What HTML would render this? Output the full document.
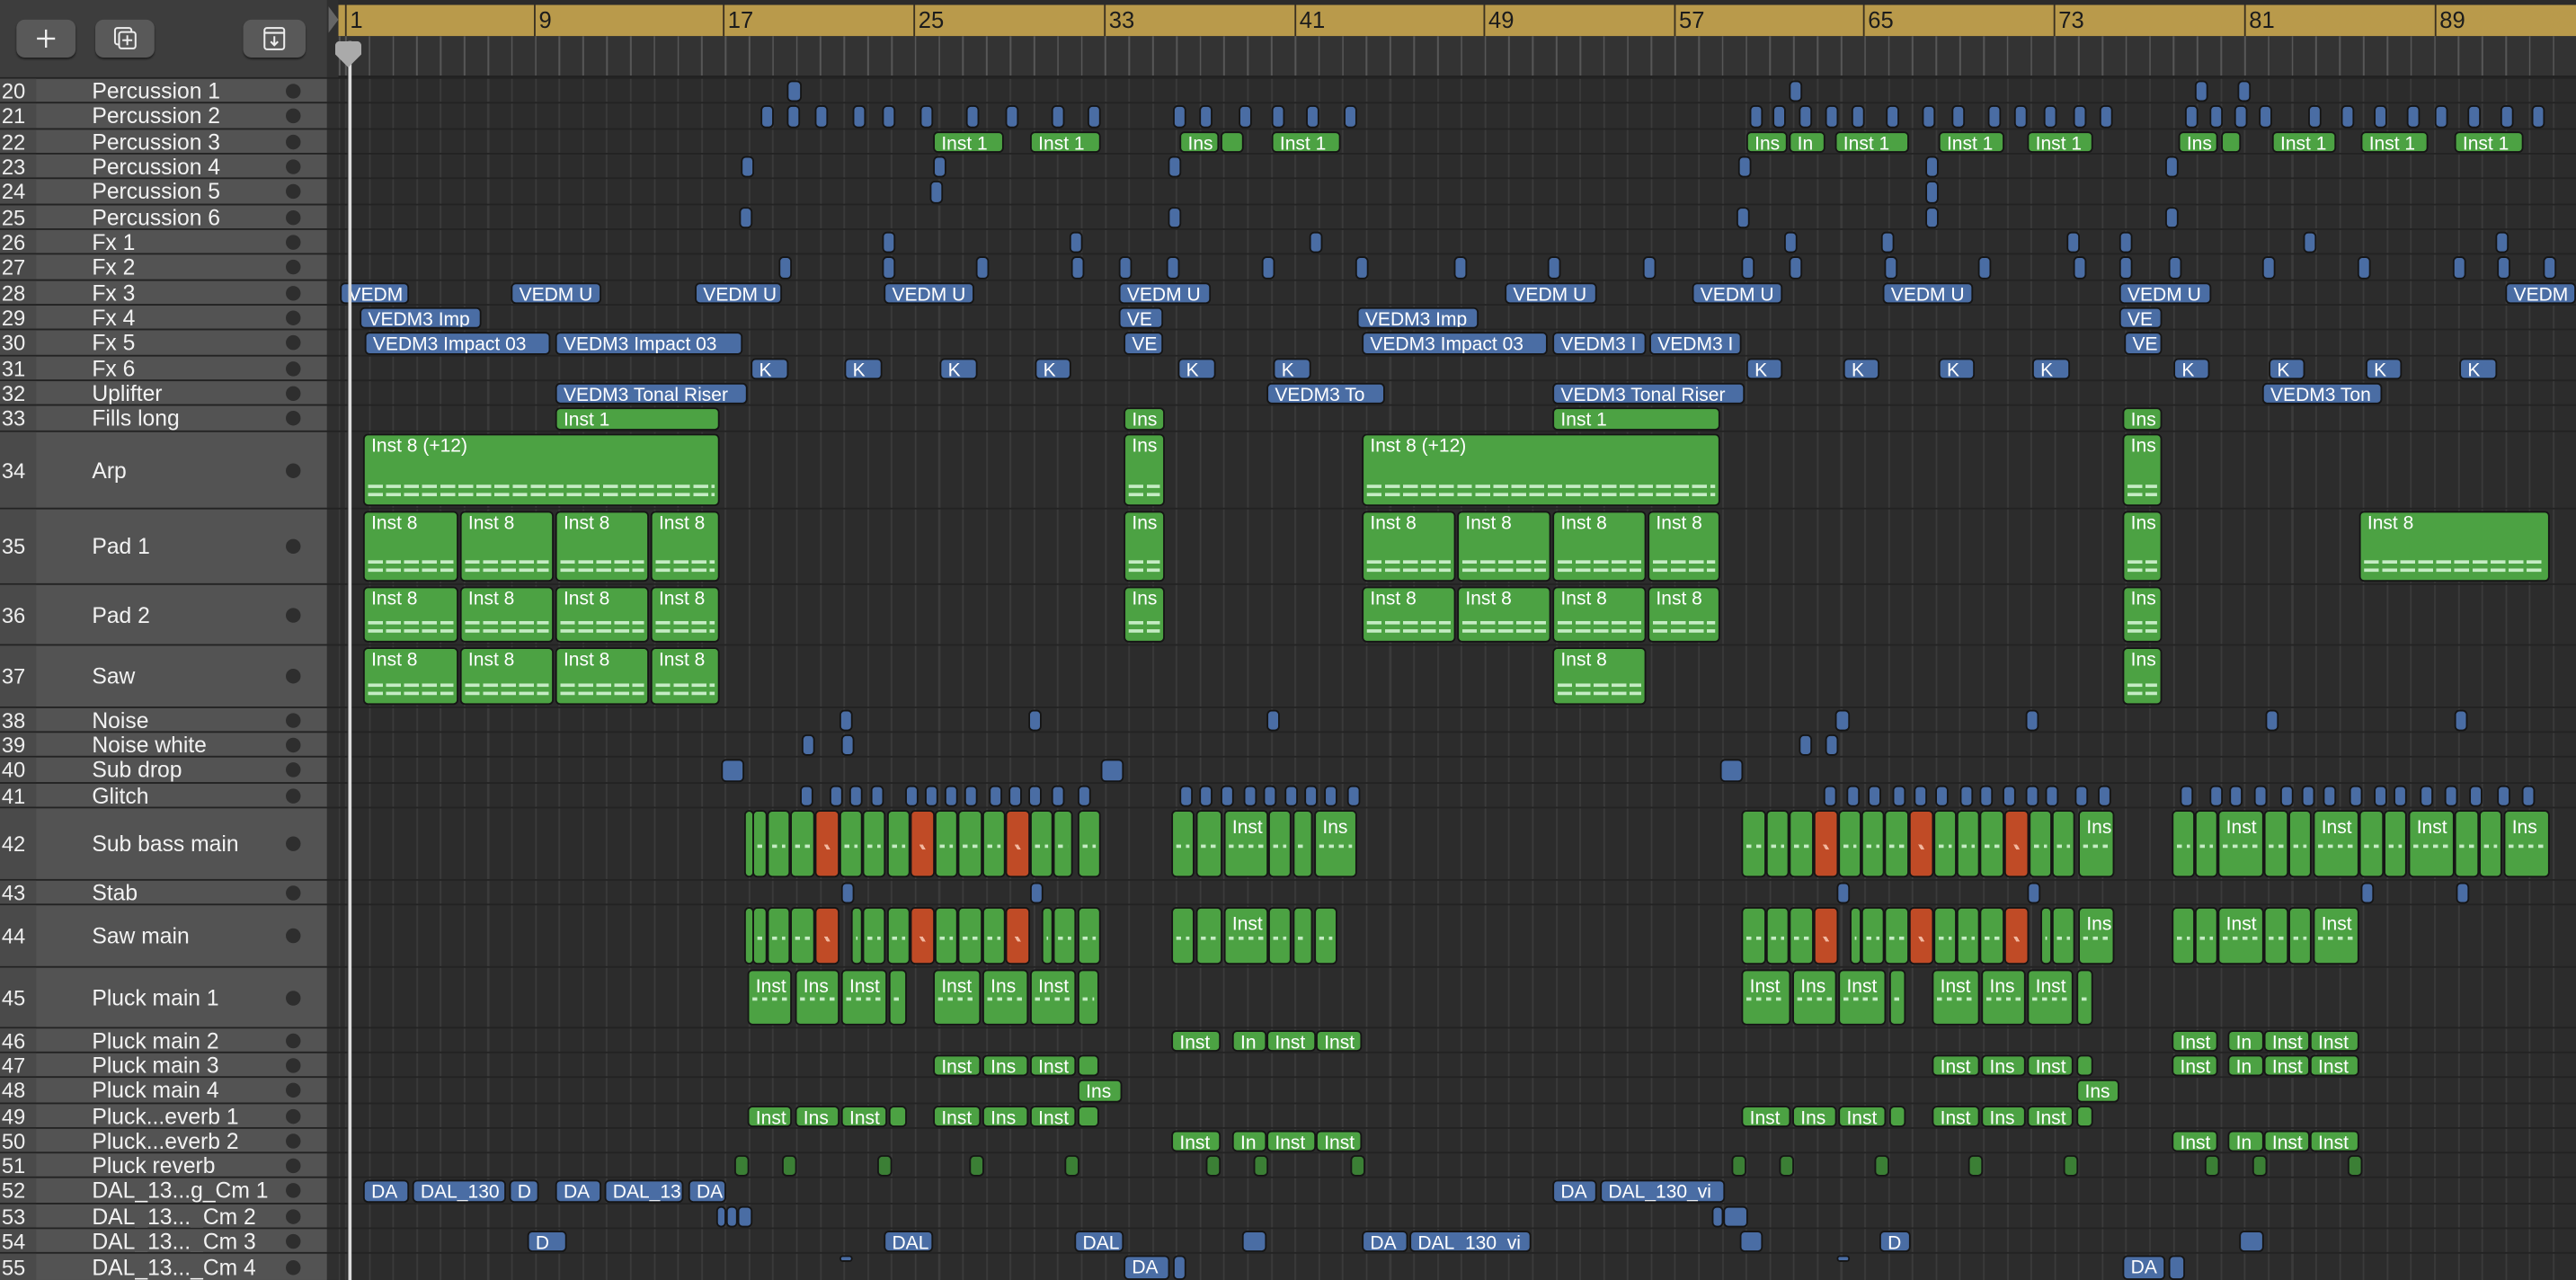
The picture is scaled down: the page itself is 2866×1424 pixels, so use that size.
<!DOCTYPE html>
<html><head><meta charset="utf-8"><style>
*{margin:0;padding:0}
html,body{width:2866px;height:1424px;overflow:hidden;background:#2b2b2b}
#s{position:absolute;left:0;top:0;width:1568px;height:779px;transform:scale(1.82781,1.82798);transform-origin:0 0;font-family:"Liberation Sans",sans-serif;background:#2b2b2b;overflow:hidden}
#tb{position:absolute;left:0;top:0;width:200px;height:47px;background:#3d3d3d;border-bottom:1px solid #2a2a2a}
.btn{position:absolute;top:12px;height:23px;background:#595959;border-radius:5px;box-shadow:0 1px 1px #222}
#arr{position:absolute;left:206px;top:44px;width:1362px;height:735px;background-color:#2c2c2c;background-image:repeating-linear-gradient(90deg,#3b3b3b 0 1px,transparent 1px 14.45px);background-position:4px 0}
#gold{position:absolute;left:206px;top:3px;width:1362px;height:19px;background:#b99a4b}
#lr{position:absolute;left:206px;top:22px;width:1362px;height:24px;background-color:#333;background-image:repeating-linear-gradient(90deg,#575757 0 1px,transparent 1px 14.45px);background-position:4px 0;border-bottom:1px solid #222}
.bn{position:absolute;top:0;height:19px;border-left:1px solid #3a3020;color:#1c1c1c;font-size:14px;line-height:19px;padding-left:2px}
.row{position:absolute;left:0;width:1568px;border-top:1px solid #232323;box-sizing:border-box}
.h{position:absolute;left:0;top:0;bottom:0;width:199px;background:#535353}
.n{position:absolute;left:0;top:0;bottom:0;width:22px;background:#4a4a4a;color:#eee;font-size:13px;display:flex;align-items:center;padding-left:1px;box-sizing:border-box}
.nm{position:absolute;left:56px;top:0;bottom:0;display:flex;align-items:center;color:#f2f2f2;font-size:13.5px;white-space:nowrap}
.d{position:absolute;left:174px;top:50%;margin-top:-4.5px;width:9px;height:9px;border-radius:50%;background:#2e2e2e}
.b{position:absolute;top:1px;bottom:0;box-sizing:border-box;border:1px solid #151515;border-radius:3px;background:#4a6da4;color:#fff;font-size:11.5px;line-height:12px;padding:1px 0 0 4px;overflow:hidden;white-space:nowrap}
.g{background:#4ca243}
.r{background:#c04b26}
.dg{background:#3b7f35}
.t::after{content:"";position:absolute;left:2px;right:2px;bottom:5px;height:7px;background:repeating-linear-gradient(90deg,#c5ecc4 0 9px,transparent 9px 11px) 0 0/100% 2px no-repeat,repeating-linear-gradient(90deg,#c5ecc4 0 9px,transparent 9px 11px) 0 5px/100% 2px no-repeat}
.s::after{content:"";position:absolute;left:2px;right:2px;top:50%;height:3px;background:repeating-linear-gradient(90deg,#c5ecc4 0 3px,transparent 3px 6px) 0 0/100% 2px no-repeat}
.r.s::after{background:linear-gradient(60deg,transparent 40%,#f2b8a0 40% 60%,transparent 60%)}
#ph{position:absolute;left:212px;top:25px;width:1.5px;height:754px;background:#ddd}
#phk{position:absolute;left:204px;top:25px;width:16px;height:16px;background:#aaa;clip-path:polygon(0 0,100% 0,100% 50%,50% 100%,0 50%);border-radius:3px}
</style></head><body><div id="s">
<div id="arr"></div>
<div id="tb">
<div class="btn" style="left:10px;width:36px"><svg width="36" height="23" viewBox="0 0 36 23"><path d="M18 6v11M12.5 11.5h11" stroke="#eee" stroke-width="1.3"/></svg></div>
<div class="btn" style="left:58px;width:36px"><svg width="36" height="23" viewBox="0 0 36 23"><rect x="12" y="5" width="10" height="10" rx="1.5" fill="none" stroke="#eee" stroke-width="1.1"/><rect x="14.5" y="7.5" width="10" height="10" rx="1.5" fill="#595959" stroke="#eee" stroke-width="1.1"/><path d="M19.5 9.5v6M16.5 12.5h6" stroke="#eee" stroke-width="1.1"/></svg></div>
<div class="btn" style="left:148px;width:38px"><svg width="38" height="23" viewBox="0 0 38 23"><rect x="13" y="5" width="12" height="13" rx="1.5" fill="none" stroke="#eee" stroke-width="1.1"/><path d="M13 8h12M19 10v5.5M16.8 13.3l2.2 2.2 2.2-2.2" fill="none" stroke="#eee" stroke-width="1.1"/></svg></div>
</div>
<div style="position:absolute;left:199px;top:0;width:7px;height:779px;background:#2f2f2f"></div>
<div style="position:absolute;left:200px;top:4px;width:0;height:0;border-left:6px solid #666;border-top:8px solid transparent;border-bottom:8px solid transparent"></div>
<div id="gold">
<div class="bn" style="left:4px">1</div><div class="bn" style="left:119px">9</div><div class="bn" style="left:234px">17</div><div class="bn" style="left:350px">25</div><div class="bn" style="left:466px">33</div><div class="bn" style="left:582px">41</div><div class="bn" style="left:697px">49</div><div class="bn" style="left:813px">57</div><div class="bn" style="left:928px">65</div><div class="bn" style="left:1044px">73</div><div class="bn" style="left:1160px">81</div><div class="bn" style="left:1276px">89</div>
</div>
<div id="lr"></div>

<div class="row" style="top:47px;height:15px"><div class="h"><div class="n">20</div><div class="nm">Percussion 1</div><div class="d"></div></div>
<div class="b" style="left:479px;width:9px"></div><div class="b" style="left:1336px;width:8px"></div><div class="b" style="left:1362px;width:8px"></div><div class="b" style="left:1089px;width:8px"></div></div>
<div class="row" style="top:62px;height:16px"><div class="h"><div class="n">21</div><div class="nm">Percussion 2</div><div class="d"></div></div>
<div class="b" style="left:463px;width:8px"></div><div class="b" style="left:479px;width:8px"></div><div class="b" style="left:496px;width:8px"></div><div class="b" style="left:519px;width:8px"></div><div class="b" style="left:537px;width:8px"></div><div class="b" style="left:560px;width:8px"></div><div class="b" style="left:588px;width:8px"></div><div class="b" style="left:612px;width:8px"></div><div class="b" style="left:640px;width:8px"></div><div class="b" style="left:662px;width:8px"></div><div class="b" style="left:714px;width:8px"></div><div class="b" style="left:730px;width:8px"></div><div class="b" style="left:754px;width:8px"></div><div class="b" style="left:774px;width:8px"></div><div class="b" style="left:795px;width:8px"></div><div class="b" style="left:818px;width:8px"></div><div class="b" style="left:1065px;width:8px"></div><div class="b" style="left:1079px;width:8px"></div><div class="b" style="left:1095px;width:8px"></div><div class="b" style="left:1111px;width:8px"></div><div class="b" style="left:1127px;width:8px"></div><div class="b" style="left:1148px;width:8px"></div><div class="b" style="left:1170px;width:8px"></div><div class="b" style="left:1188px;width:8px"></div><div class="b" style="left:1210px;width:8px"></div><div class="b" style="left:1226px;width:8px"></div><div class="b" style="left:1244px;width:8px"></div><div class="b" style="left:1262px;width:8px"></div><div class="b" style="left:1278px;width:8px"></div><div class="b" style="left:1330px;width:8px"></div><div class="b" style="left:1345px;width:8px"></div><div class="b" style="left:1360px;width:8px"></div><div class="b" style="left:1375px;width:8px"></div><div class="b" style="left:1405px;width:8px"></div><div class="b" style="left:1425px;width:8px"></div><div class="b" style="left:1445px;width:8px"></div><div class="b" style="left:1465px;width:8px"></div><div class="b" style="left:1482px;width:8px"></div><div class="b" style="left:1502px;width:8px"></div><div class="b" style="left:1522px;width:8px"></div><div class="b" style="left:1541px;width:8px"></div></div>
<div class="row" style="top:78px;height:15px"><div class="h"><div class="n">22</div><div class="nm">Percussion 3</div><div class="d"></div></div>
<div class="b g" style="left:568px;width:43px">Inst 1</div><div class="b g" style="left:627px;width:43px">Inst 1</div><div class="b g" style="left:718px;width:24px">Ins</div><div class="b g" style="left:743px;width:14px"></div><div class="b g" style="left:774px;width:42px">Inst 1</div><div class="b g" style="left:1063px;width:25px">Ins</div><div class="b g" style="left:1089px;width:22px">In</div><div class="b g" style="left:1117px;width:45px">Inst 1</div><div class="b g" style="left:1180px;width:40px">Inst 1</div><div class="b g" style="left:1234px;width:40px">Inst 1</div><div class="b g" style="left:1326px;width:24px">Ins</div><div class="b g" style="left:1352px;width:12px"></div><div class="b g" style="left:1383px;width:39px">Inst 1</div><div class="b g" style="left:1437px;width:41px">Inst 1</div><div class="b g" style="left:1494px;width:42px">Inst 1</div></div>
<div class="row" style="top:93px;height:15px"><div class="h"><div class="n">23</div><div class="nm">Percussion 4</div><div class="d"></div></div>
<div class="b" style="left:451px;width:8px"></div><div class="b" style="left:568px;width:8px"></div><div class="b" style="left:711px;width:8px"></div><div class="b" style="left:1058px;width:8px"></div><div class="b" style="left:1172px;width:8px"></div><div class="b" style="left:1318px;width:8px"></div></div>
<div class="row" style="top:108px;height:16px"><div class="h"><div class="n">24</div><div class="nm">Percussion 5</div><div class="d"></div></div>
<div class="b" style="left:566px;width:8px"></div><div class="b" style="left:1172px;width:8px"></div></div>
<div class="row" style="top:124px;height:15px"><div class="h"><div class="n">25</div><div class="nm">Percussion 6</div><div class="d"></div></div>
<div class="b" style="left:450px;width:8px"></div><div class="b" style="left:711px;width:8px"></div><div class="b" style="left:1057px;width:8px"></div><div class="b" style="left:1172px;width:8px"></div><div class="b" style="left:1318px;width:8px"></div></div>
<div class="row" style="top:139px;height:15px"><div class="h"><div class="n">26</div><div class="nm">Fx 1</div><div class="d"></div></div>
<div class="b" style="left:537px;width:8px"></div><div class="b" style="left:651px;width:8px"></div><div class="b" style="left:797px;width:8px"></div><div class="b" style="left:1086px;width:8px"></div><div class="b" style="left:1145px;width:8px"></div><div class="b" style="left:1258px;width:8px"></div><div class="b" style="left:1290px;width:8px"></div><div class="b" style="left:1402px;width:8px"></div><div class="b" style="left:1519px;width:8px"></div></div>
<div class="row" style="top:154px;height:16px"><div class="h"><div class="n">27</div><div class="nm">Fx 2</div><div class="d"></div></div>
<div class="b" style="left:474px;width:8px"></div><div class="b" style="left:537px;width:8px"></div><div class="b" style="left:594px;width:8px"></div><div class="b" style="left:652px;width:8px"></div><div class="b" style="left:681px;width:8px"></div><div class="b" style="left:710px;width:8px"></div><div class="b" style="left:768px;width:8px"></div><div class="b" style="left:825px;width:8px"></div><div class="b" style="left:885px;width:8px"></div><div class="b" style="left:942px;width:8px"></div><div class="b" style="left:1000px;width:8px"></div><div class="b" style="left:1060px;width:8px"></div><div class="b" style="left:1089px;width:8px"></div><div class="b" style="left:1147px;width:8px"></div><div class="b" style="left:1204px;width:8px"></div><div class="b" style="left:1262px;width:8px"></div><div class="b" style="left:1290px;width:8px"></div><div class="b" style="left:1320px;width:8px"></div><div class="b" style="left:1377px;width:8px"></div><div class="b" style="left:1435px;width:8px"></div><div class="b" style="left:1493px;width:8px"></div><div class="b" style="left:1520px;width:8px"></div><div class="b" style="left:1548px;width:8px"></div></div>
<div class="row" style="top:170px;height:15px"><div class="h"><div class="n">28</div><div class="nm">Fx 3</div><div class="d"></div></div>
<div class="b" style="left:207px;width:42px">VEDM</div><div class="b" style="left:311px;width:55px">VEDM U</div><div class="b" style="left:423px;width:53px">VEDM U</div><div class="b" style="left:538px;width:55px">VEDM U</div><div class="b" style="left:681px;width:56px">VEDM U</div><div class="b" style="left:916px;width:56px">VEDM U</div><div class="b" style="left:1030px;width:55px">VEDM U</div><div class="b" style="left:1146px;width:55px">VEDM U</div><div class="b" style="left:1290px;width:56px">VEDM U</div><div class="b" style="left:1525px;width:43px">VEDM</div></div>
<div class="row" style="top:185px;height:15px"><div class="h"><div class="n">29</div><div class="nm">Fx 4</div><div class="d"></div></div>
<div class="b" style="left:219px;width:74px">VEDM3 Imp</div><div class="b" style="left:681px;width:27px">VE</div><div class="b" style="left:826px;width:74px">VEDM3 Imp</div><div class="b" style="left:1290px;width:26px">VE</div></div>
<div class="row" style="top:200px;height:16px"><div class="h"><div class="n">30</div><div class="nm">Fx 5</div><div class="d"></div></div>
<div class="b" style="left:222px;width:113px">VEDM3 Impact 03</div><div class="b" style="left:338px;width:114px">VEDM3 Impact 03</div><div class="b" style="left:684px;width:24px">VE</div><div class="b" style="left:829px;width:113px">VEDM3 Impact 03</div><div class="b" style="left:945px;width:57px">VEDM3 I</div><div class="b" style="left:1004px;width:56px">VEDM3 I</div><div class="b" style="left:1293px;width:23px">VE</div></div>
<div class="row" style="top:216px;height:15px"><div class="h"><div class="n">31</div><div class="nm">Fx 6</div><div class="d"></div></div>
<div class="b" style="left:457px;width:23px">K</div><div class="b" style="left:514px;width:23px">K</div><div class="b" style="left:572px;width:23px">K</div><div class="b" style="left:630px;width:22px">K</div><div class="b" style="left:717px;width:23px">K</div><div class="b" style="left:775px;width:23px">K</div><div class="b" style="left:1063px;width:22px">K</div><div class="b" style="left:1122px;width:22px">K</div><div class="b" style="left:1180px;width:22px">K</div><div class="b" style="left:1237px;width:23px">K</div><div class="b" style="left:1323px;width:22px">K</div><div class="b" style="left:1381px;width:22px">K</div><div class="b" style="left:1440px;width:22px">K</div><div class="b" style="left:1497px;width:23px">K</div></div>
<div class="row" style="top:231px;height:15px"><div class="h"><div class="n">32</div><div class="nm">Uplifter</div><div class="d"></div></div>
<div class="b" style="left:338px;width:117px">VEDM3 Tonal Riser</div><div class="b" style="left:771px;width:72px">VEDM3 To</div><div class="b" style="left:945px;width:117px">VEDM3 Tonal Riser</div><div class="b" style="left:1377px;width:73px">VEDM3 Ton</div></div>
<div class="row" style="top:246px;height:16px"><div class="h"><div class="n">33</div><div class="nm">Fills long</div><div class="d"></div></div>
<div class="b g" style="left:338px;width:100px">Inst 1</div><div class="b g" style="left:684px;width:25px">Ins</div><div class="b g" style="left:945px;width:102px">Inst 1</div><div class="b g" style="left:1292px;width:24px">Ins</div></div>
<div class="row" style="top:262px;height:47px"><div class="h"><div class="n">34</div><div class="nm">Arp</div><div class="d"></div></div>
<div class="b g t" style="left:221px;width:217px;top:1px;bottom:1px">Inst 8 (+12)</div><div class="b g t" style="left:684px;width:25px;top:1px;bottom:1px">Ins</div><div class="b g t" style="left:829px;width:218px;top:1px;bottom:1px">Inst 8 (+12)</div><div class="b g t" style="left:1292px;width:24px;top:1px;bottom:1px">Ins</div></div>
<div class="row" style="top:309px;height:46px"><div class="h"><div class="n">35</div><div class="nm">Pad 1</div><div class="d"></div></div>
<div class="b g t" style="left:221px;width:58px;bottom:1px">Inst 8</div><div class="b g t" style="left:280px;width:57px;bottom:1px">Inst 8</div><div class="b g t" style="left:338px;width:57px;bottom:1px">Inst 8</div><div class="b g t" style="left:396px;width:42px;bottom:1px">Inst 8</div><div class="b g t" style="left:684px;width:25px;bottom:1px">Ins</div><div class="b g t" style="left:829px;width:57px;bottom:1px">Inst 8</div><div class="b g t" style="left:887px;width:57px;bottom:1px">Inst 8</div><div class="b g t" style="left:945px;width:57px;bottom:1px">Inst 8</div><div class="b g t" style="left:1003px;width:44px;bottom:1px">Inst 8</div><div class="b g t" style="left:1292px;width:24px;bottom:1px">Ins</div><div class="b g t" style="left:1436px;width:116px;bottom:1px">Inst 8</div></div>
<div class="row" style="top:355px;height:37px"><div class="h"><div class="n">36</div><div class="nm">Pad 2</div><div class="d"></div></div>
<div class="b g t" style="left:221px;width:58px;bottom:1px">Inst 8</div><div class="b g t" style="left:280px;width:57px;bottom:1px">Inst 8</div><div class="b g t" style="left:338px;width:57px;bottom:1px">Inst 8</div><div class="b g t" style="left:396px;width:42px;bottom:1px">Inst 8</div><div class="b g t" style="left:684px;width:25px;bottom:1px">Ins</div><div class="b g t" style="left:829px;width:57px;bottom:1px">Inst 8</div><div class="b g t" style="left:887px;width:57px;bottom:1px">Inst 8</div><div class="b g t" style="left:945px;width:57px;bottom:1px">Inst 8</div><div class="b g t" style="left:1003px;width:44px;bottom:1px">Inst 8</div><div class="b g t" style="left:1292px;width:24px;bottom:1px">Ins</div></div>
<div class="row" style="top:392px;height:38px"><div class="h"><div class="n">37</div><div class="nm">Saw</div><div class="d"></div></div>
<div class="b g t" style="left:221px;width:58px;bottom:1px">Inst 8</div><div class="b g t" style="left:280px;width:57px;bottom:1px">Inst 8</div><div class="b g t" style="left:338px;width:57px;bottom:1px">Inst 8</div><div class="b g t" style="left:396px;width:42px;bottom:1px">Inst 8</div><div class="b g t" style="left:945px;width:57px;bottom:1px">Inst 8</div><div class="b g t" style="left:1292px;width:24px;bottom:1px">Ins</div></div>
<div class="row" style="top:430px;height:15px"><div class="h"><div class="n">38</div><div class="nm">Noise</div><div class="d"></div></div>
<div class="b" style="left:511px;width:8px"></div><div class="b" style="left:626px;width:8px"></div><div class="b" style="left:771px;width:8px"></div><div class="b" style="left:1117px;width:9px"></div><div class="b" style="left:1233px;width:8px"></div><div class="b" style="left:1379px;width:8px"></div><div class="b" style="left:1494px;width:8px"></div></div>
<div class="row" style="top:445px;height:15px"><div class="h"><div class="n">39</div><div class="nm">Noise white</div><div class="d"></div></div>
<div class="b" style="left:488px;width:8px"></div><div class="b" style="left:512px;width:8px"></div><div class="b" style="left:1095px;width:8px"></div><div class="b" style="left:1111px;width:8px"></div></div>
<div class="row" style="top:460px;height:16px"><div class="h"><div class="n">40</div><div class="nm">Sub drop</div><div class="d"></div></div>
<div class="b" style="left:439px;width:14px"></div><div class="b" style="left:670px;width:14px"></div><div class="b" style="left:1047px;width:14px"></div></div>
<div class="row" style="top:476px;height:15px"><div class="h"><div class="n">41</div><div class="nm">Glitch</div><div class="d"></div></div>
<div class="b" style="left:487px;width:8px"></div><div class="b" style="left:505px;width:8px"></div><div class="b" style="left:517px;width:8px"></div><div class="b" style="left:530px;width:8px"></div><div class="b" style="left:551px;width:8px"></div><div class="b" style="left:563px;width:8px"></div><div class="b" style="left:575px;width:8px"></div><div class="b" style="left:587px;width:8px"></div><div class="b" style="left:602px;width:8px"></div><div class="b" style="left:614px;width:8px"></div><div class="b" style="left:626px;width:8px"></div><div class="b" style="left:640px;width:8px"></div><div class="b" style="left:656px;width:8px"></div><div class="b" style="left:718px;width:8px"></div><div class="b" style="left:730px;width:8px"></div><div class="b" style="left:743px;width:8px"></div><div class="b" style="left:757px;width:8px"></div><div class="b" style="left:769px;width:8px"></div><div class="b" style="left:782px;width:8px"></div><div class="b" style="left:794px;width:8px"></div><div class="b" style="left:806px;width:8px"></div><div class="b" style="left:820px;width:8px"></div><div class="b" style="left:1110px;width:8px"></div><div class="b" style="left:1124px;width:8px"></div><div class="b" style="left:1137px;width:8px"></div><div class="b" style="left:1152px;width:8px"></div><div class="b" style="left:1165px;width:8px"></div><div class="b" style="left:1178px;width:8px"></div><div class="b" style="left:1193px;width:8px"></div><div class="b" style="left:1205px;width:8px"></div><div class="b" style="left:1219px;width:8px"></div><div class="b" style="left:1233px;width:8px"></div><div class="b" style="left:1245px;width:8px"></div><div class="b" style="left:1263px;width:8px"></div><div class="b" style="left:1277px;width:8px"></div><div class="b" style="left:1327px;width:8px"></div><div class="b" style="left:1345px;width:8px"></div><div class="b" style="left:1357px;width:8px"></div><div class="b" style="left:1372px;width:8px"></div><div class="b" style="left:1388px;width:8px"></div><div class="b" style="left:1401px;width:8px"></div><div class="b" style="left:1414px;width:8px"></div><div class="b" style="left:1430px;width:8px"></div><div class="b" style="left:1445px;width:8px"></div><div class="b" style="left:1457px;width:8px"></div><div class="b" style="left:1473px;width:8px"></div><div class="b" style="left:1488px;width:8px"></div><div class="b" style="left:1503px;width:8px"></div><div class="b" style="left:1520px;width:8px"></div><div class="b" style="left:1535px;width:8px"></div></div>
<div class="row" style="top:491px;height:44px"><div class="h"><div class="n">42</div><div class="nm">Sub bass main</div><div class="d"></div></div>
<div class="b g s" style="left:453px;width:5px;bottom:1px"></div><div class="b g s" style="left:458px;width:9px;bottom:1px"></div><div class="b g s" style="left:467px;width:14px;bottom:1px"></div><div class="b g s" style="left:481px;width:15px;bottom:1px"></div><div class="b r s" style="left:496px;width:15px;bottom:1px"></div><div class="b g s" style="left:511px;width:14px;bottom:1px"></div><div class="b g s" style="left:525px;width:14px;bottom:1px"></div><div class="b g s" style="left:540px;width:14px;bottom:1px"></div><div class="b r s" style="left:554px;width:15px;bottom:1px"></div><div class="b g s" style="left:569px;width:14px;bottom:1px"></div><div class="b g s" style="left:583px;width:15px;bottom:1px"></div><div class="b g s" style="left:598px;width:14px;bottom:1px"></div><div class="b r s" style="left:612px;width:15px;bottom:1px"></div><div class="b g s" style="left:627px;width:14px;bottom:1px"></div><div class="b g s" style="left:641px;width:12px;bottom:1px"></div><div class="b g s" style="left:656px;width:14px;bottom:1px"></div>
<div class="b g s" style="left:713px;width:14px;bottom:1px"></div><div class="b g s" style="left:728px;width:16px;bottom:1px"></div><div class="b g s" style="left:745px;width:27px;bottom:1px;padding-top:4px">Inst</div><div class="b g s" style="left:772px;width:14px;bottom:1px"></div><div class="b g s" style="left:787px;width:12px;bottom:1px"></div><div class="b g s" style="left:800px;width:26px;bottom:1px;padding-top:4px">Ins</div>
<div class="b g s" style="left:1060px;width:15px;bottom:1px"></div><div class="b g s" style="left:1075px;width:14px;bottom:1px"></div><div class="b g s" style="left:1089px;width:15px;bottom:1px"></div><div class="b r s" style="left:1104px;width:15px;bottom:1px"></div><div class="b g s" style="left:1119px;width:14px;bottom:1px"></div><div class="b g s" style="left:1133px;width:14px;bottom:1px"></div><div class="b g s" style="left:1147px;width:15px;bottom:1px"></div><div class="b r s" style="left:1162px;width:15px;bottom:1px"></div><div class="b g s" style="left:1177px;width:14px;bottom:1px"></div><div class="b g s" style="left:1191px;width:14px;bottom:1px"></div><div class="b g s" style="left:1205px;width:15px;bottom:1px"></div><div class="b r s" style="left:1220px;width:15px;bottom:1px"></div><div class="b g s" style="left:1235px;width:14px;bottom:1px"></div><div class="b g s" style="left:1249px;width:14px;bottom:1px"></div><div class="b g s" style="left:1265px;width:22px;bottom:1px;padding-top:4px">Ins</div>
<div class="b g s" style="left:1322px;width:14px;bottom:1px"></div><div class="b g s" style="left:1336px;width:14px;bottom:1px"></div><div class="b g s" style="left:1350px;width:28px;bottom:1px;padding-top:4px">Inst</div><div class="b g s" style="left:1378px;width:15px;bottom:1px"></div><div class="b g s" style="left:1393px;width:14px;bottom:1px"></div><div class="b g s" style="left:1408px;width:28px;bottom:1px;padding-top:4px">Inst</div><div class="b g s" style="left:1436px;width:15px;bottom:1px"></div><div class="b g s" style="left:1451px;width:14px;bottom:1px"></div><div class="b g s" style="left:1466px;width:28px;bottom:1px;padding-top:4px">Inst</div><div class="b g s" style="left:1494px;width:15px;bottom:1px"></div><div class="b g s" style="left:1509px;width:14px;bottom:1px"></div><div class="b g s" style="left:1524px;width:28px;bottom:1px;padding-top:4px">Ins</div></div>
<div class="row" style="top:535px;height:15px"><div class="h"><div class="n">43</div><div class="nm">Stab</div><div class="d"></div></div>
<div class="b" style="left:512px;width:8px"></div><div class="b" style="left:627px;width:8px"></div><div class="b" style="left:1118px;width:8px"></div><div class="b" style="left:1234px;width:8px"></div><div class="b" style="left:1437px;width:8px"></div><div class="b" style="left:1495px;width:8px"></div></div>
<div class="row" style="top:550px;height:38px"><div class="h"><div class="n">44</div><div class="nm">Saw main</div><div class="d"></div></div>
<div class="b g s" style="left:453px;width:5px;bottom:1px"></div><div class="b g s" style="left:458px;width:9px;bottom:1px"></div><div class="b g s" style="left:467px;width:14px;bottom:1px"></div><div class="b g s" style="left:481px;width:15px;bottom:1px"></div><div class="b r s" style="left:496px;width:15px;bottom:1px"></div><div class="b g s" style="left:518px;width:7px;bottom:1px"></div><div class="b g s" style="left:525px;width:14px;bottom:1px"></div><div class="b g s" style="left:540px;width:14px;bottom:1px"></div><div class="b r s" style="left:554px;width:15px;bottom:1px"></div><div class="b g s" style="left:569px;width:14px;bottom:1px"></div><div class="b g s" style="left:583px;width:15px;bottom:1px"></div><div class="b g s" style="left:598px;width:14px;bottom:1px"></div><div class="b r s" style="left:612px;width:15px;bottom:1px"></div><div class="b g s" style="left:634px;width:7px;bottom:1px"></div><div class="b g s" style="left:641px;width:14px;bottom:1px"></div><div class="b g s" style="left:656px;width:14px;bottom:1px"></div>
<div class="b g s" style="left:713px;width:14px;bottom:1px"></div><div class="b g s" style="left:728px;width:16px;bottom:1px"></div><div class="b g s" style="left:745px;width:27px;bottom:1px;padding-top:4px">Inst</div><div class="b g s" style="left:772px;width:14px;bottom:1px"></div><div class="b g s" style="left:787px;width:12px;bottom:1px"></div><div class="b g s" style="left:800px;width:14px;bottom:1px"></div>
<div class="b g s" style="left:1060px;width:15px;bottom:1px"></div><div class="b g s" style="left:1075px;width:14px;bottom:1px"></div><div class="b g s" style="left:1089px;width:15px;bottom:1px"></div><div class="b r s" style="left:1104px;width:15px;bottom:1px"></div><div class="b g s" style="left:1126px;width:7px;bottom:1px"></div><div class="b g s" style="left:1133px;width:14px;bottom:1px"></div><div class="b g s" style="left:1147px;width:15px;bottom:1px"></div><div class="b r s" style="left:1162px;width:15px;bottom:1px"></div><div class="b g s" style="left:1177px;width:14px;bottom:1px"></div><div class="b g s" style="left:1191px;width:14px;bottom:1px"></div><div class="b g s" style="left:1205px;width:15px;bottom:1px"></div><div class="b r s" style="left:1220px;width:15px;bottom:1px"></div><div class="b g s" style="left:1242px;width:7px;bottom:1px"></div><div class="b g s" style="left:1249px;width:14px;bottom:1px"></div><div class="b g s" style="left:1265px;width:22px;bottom:1px;padding-top:4px">Ins</div>
<div class="b g s" style="left:1322px;width:14px;bottom:1px"></div><div class="b g s" style="left:1336px;width:14px;bottom:1px"></div><div class="b g s" style="left:1350px;width:28px;bottom:1px;padding-top:4px">Inst</div><div class="b g s" style="left:1378px;width:15px;bottom:1px"></div><div class="b g s" style="left:1393px;width:14px;bottom:1px"></div><div class="b g s" style="left:1408px;width:28px;bottom:1px;padding-top:4px">Inst</div></div>
<div class="row" style="top:588px;height:37px"><div class="h"><div class="n">45</div><div class="nm">Pluck main 1</div><div class="d"></div></div>
<div class="b g s" style="left:455px;width:27px;bottom:1px;padding-top:4px">Inst</div><div class="b g s" style="left:484px;width:27px;bottom:1px;padding-top:4px">Ins</div><div class="b g s" style="left:512px;width:28px;bottom:1px;padding-top:4px">Inst</div><div class="b g s" style="left:541px;width:11px;bottom:1px"></div><div class="b g s" style="left:568px;width:29px;bottom:1px;padding-top:4px">Inst</div><div class="b g s" style="left:598px;width:28px;bottom:1px;padding-top:4px">Ins</div><div class="b g s" style="left:627px;width:28px;bottom:1px;padding-top:4px">Inst</div><div class="b g s" style="left:656px;width:13px;bottom:1px"></div><div class="b g s" style="left:1060px;width:30px;bottom:1px;padding-top:4px">Inst</div><div class="b g s" style="left:1091px;width:27px;bottom:1px;padding-top:4px">Ins</div><div class="b g s" style="left:1119px;width:29px;bottom:1px;padding-top:4px">Inst</div><div class="b g s" style="left:1150px;width:10px;bottom:1px"></div><div class="b g s" style="left:1176px;width:29px;bottom:1px;padding-top:4px">Inst</div><div class="b g s" style="left:1206px;width:27px;bottom:1px;padding-top:4px">Ins</div><div class="b g s" style="left:1234px;width:28px;bottom:1px;padding-top:4px">Inst</div><div class="b g s" style="left:1264px;width:10px;bottom:1px"></div></div>
<div class="row" style="top:625px;height:15px"><div class="h"><div class="n">46</div><div class="nm">Pluck main 2</div><div class="d"></div></div>
<div class="b g" style="left:713px;width:30px">Inst</div><div class="b g" style="left:750px;width:21px">In</div><div class="b g" style="left:771px;width:30px">Inst</div><div class="b g" style="left:801px;width:28px">Inst</div><div class="b g" style="left:1322px;width:28px">Inst</div><div class="b g" style="left:1356px;width:22px">In</div><div class="b g" style="left:1378px;width:28px">Inst</div><div class="b g" style="left:1406px;width:30px">Inst</div></div>
<div class="row" style="top:640px;height:15px"><div class="h"><div class="n">47</div><div class="nm">Pluck main 3</div><div class="d"></div></div>
<div class="b g" style="left:568px;width:29px">Inst</div><div class="b g" style="left:598px;width:28px">Ins</div><div class="b g" style="left:627px;width:28px">Inst</div><div class="b g" style="left:656px;width:13px"></div><div class="b g" style="left:1176px;width:29px">Inst</div><div class="b g" style="left:1206px;width:27px">Ins</div><div class="b g" style="left:1234px;width:28px">Inst</div><div class="b g" style="left:1264px;width:10px"></div><div class="b g" style="left:1322px;width:28px">Inst</div><div class="b g" style="left:1356px;width:22px">In</div><div class="b g" style="left:1378px;width:28px">Inst</div><div class="b g" style="left:1406px;width:30px">Inst</div></div>
<div class="row" style="top:655px;height:16px"><div class="h"><div class="n">48</div><div class="nm">Pluck main 4</div><div class="d"></div></div>
<div class="b g" style="left:656px;width:27px">Ins</div><div class="b g" style="left:1264px;width:26px">Ins</div></div>
<div class="row" style="top:671px;height:15px"><div class="h"><div class="n">49</div><div class="nm">Pluck...everb 1</div><div class="d"></div></div>
<div class="b g" style="left:455px;width:27px">Inst</div><div class="b g" style="left:484px;width:27px">Ins</div><div class="b g" style="left:512px;width:28px">Inst</div><div class="b g" style="left:541px;width:11px"></div><div class="b g" style="left:568px;width:29px">Inst</div><div class="b g" style="left:598px;width:28px">Ins</div><div class="b g" style="left:627px;width:28px">Inst</div><div class="b g" style="left:656px;width:13px"></div><div class="b g" style="left:1060px;width:30px">Inst</div><div class="b g" style="left:1091px;width:27px">Ins</div><div class="b g" style="left:1119px;width:29px">Inst</div><div class="b g" style="left:1150px;width:10px"></div><div class="b g" style="left:1176px;width:29px">Inst</div><div class="b g" style="left:1206px;width:27px">Ins</div><div class="b g" style="left:1234px;width:28px">Inst</div><div class="b g" style="left:1264px;width:10px"></div></div>
<div class="row" style="top:686px;height:15px"><div class="h"><div class="n">50</div><div class="nm">Pluck...everb 2</div><div class="d"></div></div>
<div class="b g" style="left:713px;width:30px">Inst</div><div class="b g" style="left:750px;width:21px">In</div><div class="b g" style="left:771px;width:30px">Inst</div><div class="b g" style="left:801px;width:28px">Inst</div><div class="b g" style="left:1322px;width:28px">Inst</div><div class="b g" style="left:1356px;width:22px">In</div><div class="b g" style="left:1378px;width:28px">Inst</div><div class="b g" style="left:1406px;width:30px">Inst</div></div>
<div class="row" style="top:701px;height:15px"><div class="h"><div class="n">51</div><div class="nm">Pluck reverb</div><div class="d"></div></div>
<div class="b dg" style="left:447px;width:9px"></div><div class="b dg" style="left:476px;width:9px"></div><div class="b dg" style="left:534px;width:9px"></div><div class="b dg" style="left:590px;width:9px"></div><div class="b dg" style="left:648px;width:9px"></div><div class="b dg" style="left:734px;width:9px"></div><div class="b dg" style="left:763px;width:9px"></div><div class="b dg" style="left:822px;width:9px"></div><div class="b dg" style="left:1054px;width:9px"></div><div class="b dg" style="left:1083px;width:9px"></div><div class="b dg" style="left:1141px;width:9px"></div><div class="b dg" style="left:1198px;width:9px"></div><div class="b dg" style="left:1256px;width:9px"></div><div class="b dg" style="left:1342px;width:9px"></div><div class="b dg" style="left:1371px;width:9px"></div><div class="b dg" style="left:1429px;width:9px"></div></div>
<div class="row" style="top:716px;height:16px"><div class="h"><div class="n">52</div><div class="nm">DAL_13...g_Cm 1</div><div class="d"></div></div>
<div class="b" style="left:221px;width:28px">DA</div><div class="b" style="left:251px;width:57px">DAL_130</div><div class="b" style="left:310px;width:18px">D</div><div class="b" style="left:338px;width:28px">DA</div><div class="b" style="left:368px;width:48px">DAL_13</div><div class="b" style="left:419px;width:23px">DA</div><div class="b" style="left:945px;width:27px">DA</div><div class="b" style="left:974px;width:76px">DAL_130_vi</div></div>
<div class="row" style="top:732px;height:15px"><div class="h"><div class="n">53</div><div class="nm">DAL_13..._Cm 2</div><div class="d"></div></div>
<div class="b" style="left:436px;width:6px"></div><div class="b" style="left:442px;width:7px"></div><div class="b" style="left:449px;width:9px"></div><div class="b" style="left:1042px;width:7px"></div><div class="b" style="left:1049px;width:15px"></div></div>
<div class="row" style="top:747px;height:15px"><div class="h"><div class="n">54</div><div class="nm">DAL_13..._Cm 3</div><div class="d"></div></div>
<div class="b" style="left:321px;width:24px">D</div><div class="b" style="left:538px;width:30px">DAL</div><div class="b" style="left:654px;width:30px">DAL</div><div class="b" style="left:756px;width:15px"></div><div class="b" style="left:829px;width:28px">DA</div><div class="b" style="left:858px;width:74px">DAL_130_vi</div><div class="b" style="left:1059px;width:14px"></div><div class="b" style="left:1144px;width:19px">D</div><div class="b" style="left:1363px;width:15px"></div></div>
<div class="row" style="top:762px;height:17px"><div class="h"><div class="n">55</div><div class="nm">DAL_13..._Cm 4</div><div class="d"></div></div>
<div class="b" style="left:684px;width:28px">DA</div><div class="b" style="left:714px;width:8px"></div><div class="b" style="left:1292px;width:26px">DA</div><div class="b" style="left:1320px;width:10px"></div><div class="b" style="left:511px;width:8px;height:4px"></div><div class="b" style="left:1118px;width:8px;height:4px"></div></div>

<div id="ph"></div><div id="phk"></div>
</div></body></html>
